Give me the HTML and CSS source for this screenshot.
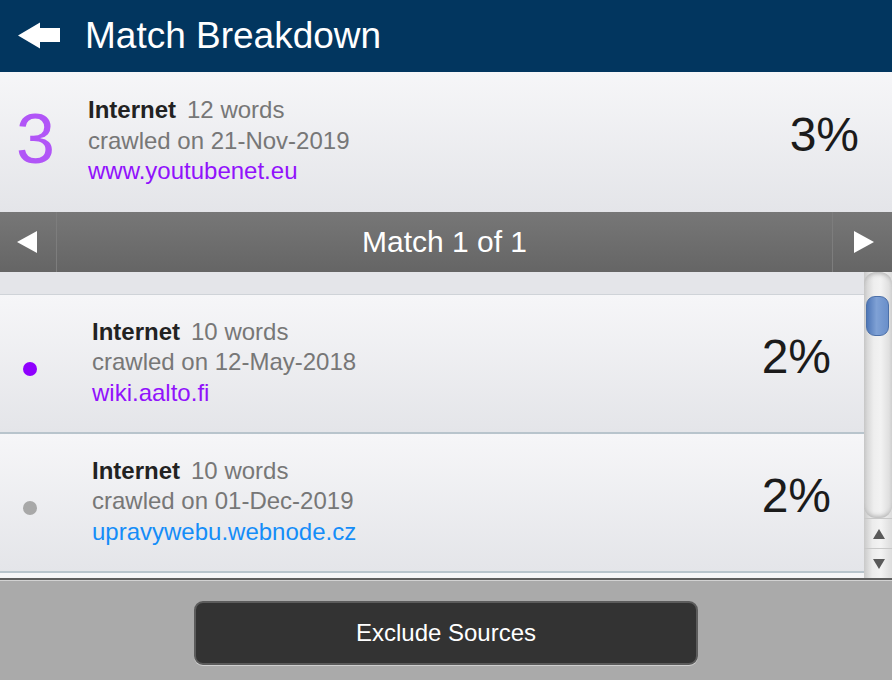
FILE: index.html
```html
<!DOCTYPE html>
<html lang="en">
  <head>
    <meta charset="UTF-8" />
    <meta name="viewport" content="width=device-width, initial-scale=1.0" />
    <title>Match Breakdown</title>
    <link rel="stylesheet" href="styles.css">
  </head>
  <body>
    <div class="app">
      <!-- Title bar -->
      <header class="topbar">
        <button class="back" aria-label="Back">
          <svg width="44" height="28" viewBox="0 0 44 28">
            <polygon points="1,13.5 23,0.5 23,6 43,6 43,20 23,20 23,26.5" fill="#fff" />
          </svg>
        </button>
        <h1>Match Breakdown</h1>
      </header>

      <!-- Selected source summary -->
      <section class="source">
        <div class="source-rank">3</div>
        <div class="info">
          <div class="info-head"><b>Internet</b><span class="words">12 words</span></div>
          <div class="crawl">crawled on 21-Nov-2019</div>
          <div class="url url-purple">www.youtubenet.eu</div>
        </div>
        <div class="pct">3%</div>
      </section>

      <!-- Match pager -->
      <nav class="pager">
        <button class="pager-btn prev" aria-label="Previous"><span class="tri tri-left"></span></button>
        <div class="pager-label">Match 1 of 1</div>
        <button class="pager-btn next" aria-label="Next"><span class="tri tri-right"></span></button>
      </nav>

      <!-- Match list -->
      <div class="list-wrap">
        <div class="list">
          <div class="list-gap"></div>

          <div class="match">
            <span class="dot dot-purple"></span>
            <div class="info">
              <div class="info-head"><b>Internet</b><span class="words">10 words</span></div>
              <div class="crawl">crawled on 12-May-2018</div>
              <div class="url url-purple">wiki.aalto.fi</div>
            </div>
            <div class="pct">2%</div>
          </div>

          <div class="match">
            <span class="dot dot-grey"></span>
            <div class="info">
              <div class="info-head"><b>Internet</b><span class="words">10 words</span></div>
              <div class="crawl">crawled on 01-Dec-2019</div>
              <div class="url url-blue">upravywebu.webnode.cz</div>
            </div>
            <div class="pct">2%</div>
          </div>

          <div class="match"></div>
        </div>

        <div class="scrollbar">
          <div class="track">
            <div class="thumb"></div>
          </div>
          <div class="scroll-btn"><span class="mini-tri mini-up"></span></div>
          <div class="scroll-btn"><span class="mini-tri mini-down"></span></div>
        </div>
      </div>

      <!-- Bottom action -->
      <footer class="actions">
        <button class="exclude">Exclude Sources</button>
      </footer>
    </div>
  </body>
</html>
```

FILE: styles.css
```css
/* Page */
html,
body {
  margin: 0;
  padding: 0;
}

body {
  font-family: "Liberation Sans", Arial, sans-serif;
  background: #aaaaaa;
}

button {
  font-family: inherit;
  border: none;
  background: none;
  padding: 0;
  cursor: pointer;
}

.app {
  width: 892px;
  height: 680px;
  display: flex;
  flex-direction: column;
  overflow: hidden;
}

/* Title bar */
.topbar {
  height: 72px;
  flex: none;
  display: flex;
  align-items: center;
  background: #02365f;
}

.back {
  margin-left: 17px;
  display: flex;
}

.topbar h1 {
  margin: 0 0 0 24px;
  font-size: 37px;
  font-weight: normal;
  color: #fff;
}

/* Shared info block */
.info {
  font-size: 24px;
  line-height: 30.5px;
  margin-bottom: 2px;
  white-space: nowrap;
}

.info-head b {
  color: #222;
}

.words {
  margin-left: 11px;
  color: #777;
}

.crawl {
  color: #777;
}

.url-purple {
  color: #9112fc;
}

.url-blue {
  color: #158df8;
}

.pct {
  margin-left: auto;
  font-size: 48px;
  line-height: 1;
  color: #1b1b1b;
  margin-bottom: 14px;
}

/* Selected source summary */
.source {
  height: 140px;
  flex: none;
  display: flex;
  align-items: center;
  padding: 0 33px 0 16px;
  background: linear-gradient(#f6f6f8, #e4e5e9);
}

.source-rank {
  width: 72px;
  font-size: 70px;
  line-height: 1;
  color: #b155f7;
  margin-bottom: 6px;
}

/* Match pager */
.pager {
  height: 60px;
  flex: none;
  display: flex;
  align-items: stretch;
  background: linear-gradient(#777777, #656565);
}

.pager-btn {
  display: flex;
  align-items: center;
  justify-content: center;
}

.prev {
  width: 57px;
  border-right: 1px solid #7d7d7d;
}

.next {
  width: 60px;
  border-left: 1px solid #7d7d7d;
}

.pager-label {
  flex: 1;
  display: flex;
  align-items: center;
  justify-content: center;
  font-size: 30px;
  color: #fff;
}

.tri {
  width: 0;
  height: 0;
  border-top: 11.5px solid transparent;
  border-bottom: 11.5px solid transparent;
}

.tri-left {
  border-right: 20px solid #fff;
  margin-right: 2px;
}

.tri-right {
  border-left: 20px solid #fff;
  margin-left: 3px;
}

/* Match list */
.list-wrap {
  height: 306px;
  flex: none;
  display: flex;
  background: #e4e5e9;
}

.list {
  flex: 1;
  overflow: hidden;
}

.list-gap {
  height: 22px;
  border-bottom: 1px solid #cfd3d8;
}

.match {
  height: 137px;
  display: flex;
  align-items: center;
  padding: 0 33px 0 23px;
  border-bottom: 2px solid #b8c4cc;
  background: linear-gradient(#f6f6f8, #e4e5e9);
}

.dot {
  width: 14px;
  height: 14px;
  border-radius: 50%;
  margin: 10px 55px 0 0;
  flex: none;
}

.dot-purple {
  background: #8f00fe;
}

.dot-grey {
  background: #a8a8a8;
}

/* Scrollbar */
.scrollbar {
  width: 28px;
  flex: none;
  display: flex;
  flex-direction: column;
  background: linear-gradient(to right, #c9c9c9, #ececec 30%, #f3f3f3 60%, #dcdcdc);
}

.track {
  height: 246px;
  padding: 24px 0 0 2px;
  box-sizing: border-box;
  border-radius: 12px;
  background: linear-gradient(to right, #cdcdcd, #eeeeee 35%, #f2f2f2 60%, #d9d9d9);
  box-shadow: inset 0 4px 4px -2px #b5b5b5, inset 0 -4px 4px -2px #b5b5b5;
}

.thumb {
  width: 23px;
  height: 40px;
  border-radius: 9px;
  box-sizing: border-box;
  border: 1px solid #4c70a9;
  background: linear-gradient(to right, #4f77b7, #7fa1d5 45%, #6a8fca);
}

.scroll-btn {
  height: 29px;
  display: flex;
  align-items: center;
  justify-content: center;
  border-top: 1px solid #c8c8c8;
}

.mini-tri {
  width: 0;
  height: 0;
  border-left: 6.5px solid transparent;
  border-right: 6.5px solid transparent;
  margin-left: 1px;
}

.mini-up {
  border-bottom: 10px solid #5a5a5a;
}

.mini-down {
  border-top: 10px solid #5a5a5a;
}

/* Bottom action */
.actions {
  flex: 1;
  border-top: 2px solid #5e5e5e;
  box-shadow: inset 0 1px 0 #d2d2d2;
  background: #aaaaaa;
  display: flex;
  justify-content: center;
  padding-top: 21px;
}

.exclude {
  width: 504px;
  height: 64px;
  box-sizing: border-box;
  border: 2px solid #5c5c5c;
  border-radius: 9px;
  background: #333333;
  color: #fff;
  font-size: 24px;
  box-shadow: 0 1px 0 #d0d0d0;
}
```
